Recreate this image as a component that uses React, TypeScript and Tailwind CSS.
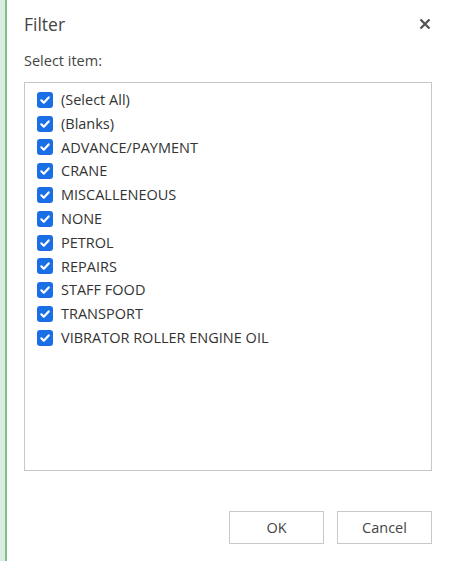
import React from "react";

const items = [
  "(Select All)",
  "(Blanks)",
  "ADVANCE/PAYMENT",
  "CRANE",
  "MISCALLENEOUS",
  "NONE",
  "PETROL",
  "REPAIRS",
  "STAFF FOOD",
  "TRANSPORT",
  "VIBRATOR ROLLER ENGINE OIL",
];

function Check() {
  return (
    <div className="w-[16px] h-[16px] rounded-[3px] bg-[#1a6fe6] flex items-center justify-center shrink-0">
      <svg width="12" height="12" viewBox="0 0 12 12">
        <path d="M2.3 6.3 L4.8 8.7 L9.7 3.4" fill="none" stroke="white" strokeWidth="2.2" strokeLinecap="round" strokeLinejoin="round" />
      </svg>
    </div>
  );
}

export default function App() {
  return (
    <div className="w-[450px] h-[561px] flex bg-white" style={{ fontFamily: '"Open Sans", "Noto Sans", sans-serif' }}>
      <div className="w-[7px] h-full bg-[#dcebe0] border-r-[2px] border-[#7fbf8f] shrink-0"></div>
      <div className="flex-1 flex flex-col pl-[17px] pr-[18px]">
        <div className="flex items-center justify-between h-[48px]">
          <div className="text-[17.5px] text-[#444444]">Filter</div>
          <svg width="12" height="12" viewBox="0 0 12 12" className="mr-[1px] -mt-[1px]">
            <path d="M1.5 1.5 L10.5 10.5 M10.5 1.5 L1.5 10.5" stroke="#555555" strokeWidth="2.4" />
          </svg>
        </div>
        <div className="text-[14.5px] text-[#444444] leading-[20px] mt-[3px]">Select item:</div>
        <div className="mt-[11px] h-[389px] border border-[#c8c8c8] pt-[5px] pl-[12px]">
          {items.map((t) => (
            <div key={t} className="flex items-center gap-[8px] h-[23.8px]">
              <Check />
              <span className="text-[14.5px] text-[#333333]">{t}</span>
            </div>
          ))}
        </div>
        <div className="flex justify-end gap-[13px] mt-[40px]">
          <button className="w-[95px] h-[33px] border border-[#c8c8c8] bg-white text-[14.5px] text-[#444444]">OK</button>
          <button className="w-[95px] h-[33px] border border-[#c8c8c8] bg-white text-[14.5px] text-[#444444]">Cancel</button>
        </div>
      </div>
    </div>
  );
}
